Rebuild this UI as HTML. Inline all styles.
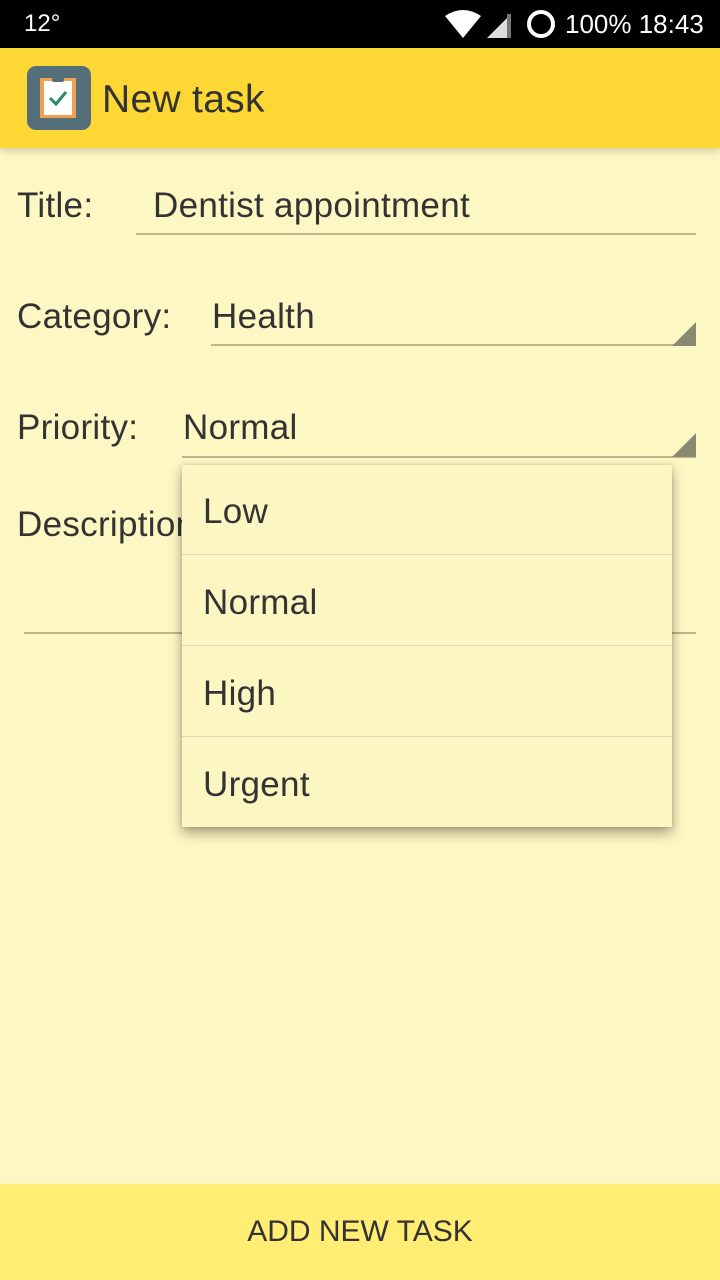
<!DOCTYPE html>
<html><head><meta charset="utf-8"><style>
*{margin:0;padding:0;box-sizing:border-box}
body{width:720px;height:1280px;background:#fdf7c3;font-family:"Liberation Sans",sans-serif;color:#333;position:relative;overflow:hidden}
.abs{position:absolute}
.sb{left:0;top:0;width:720px;height:48px;background:#000;color:#fff}
.hd{left:0;top:48px;width:720px;height:100px;background:#fdd835;box-shadow:0 3px 8px rgba(0,0,0,.18)}
.t{font-size:35px;letter-spacing:0.3px;white-space:nowrap}
.line{height:2px;background:#bdb68c}
.tri{width:0;height:0;border-left:24px solid transparent;border-bottom:24px solid #8a8a72}
.menu{left:182px;top:465px;width:490px;height:362px;background:#fcf6c2;box-shadow:0 6px 12px rgba(0,0,0,.35),0 0 4px rgba(0,0,0,.15);z-index:2}
.it{position:absolute;left:0;width:490px;height:90px;border-bottom:1px solid #ddd8b6}
.it span{position:absolute;left:21px;top:27px;font-size:35px;letter-spacing:0.3px}
</style></head><body>
<div class="abs sb">
 <div class="abs" style="left:24px;top:10px;font-size:24px">12°</div>
 <svg class="abs" style="left:443px;top:8px" width="72" height="32"><path d="M2 8 Q20 -4 38 8 L20 30Z" fill="#fff"/><path d="M44 30 L68 6 L68 30Z" fill="#ddd"/><rect x="64" y="6" width="4" height="24" fill="#777"/></svg>
 <svg class="abs" style="left:525px;top:9px" width="32" height="32"><circle cx="16" cy="15" r="12" fill="none" stroke="#fff" stroke-width="4"/></svg>
 <div class="abs" style="left:565px;top:9px;font-size:26px">100% 18:43</div>
</div>
<div class="abs hd">
 <svg class="abs" style="left:27px;top:18px" width="64" height="64"><rect width="64" height="64" rx="9" fill="#546e7a"/><rect x="13" y="12" width="36" height="40" fill="#f0a050"/><rect x="17" y="15" width="28" height="34" fill="#fff"/><rect x="25" y="9" width="12" height="7" rx="2" fill="#546e7a"/><path d="M23 32 L29 38 L39 26" stroke="#2e8b6a" stroke-width="3" fill="none"/></svg>
 <div class="abs t" style="left:102px;top:30px;font-size:39px;color:#333">New task</div>
</div>
<div class="abs t" style="left:17px;top:186px">Title:</div>
<div class="abs t" style="left:153px;top:186px">Dentist appointment</div>
<div class="abs line" style="left:136px;top:233px;width:560px"></div>
<div class="abs t" style="left:17px;top:297px">Category:</div>
<div class="abs t" style="left:212px;top:297px">Health</div>
<div class="abs line" style="left:211px;top:344px;width:485px"></div>
<div class="abs tri" style="left:672px;top:322px"></div>
<div class="abs t" style="left:17px;top:408px">Priority:</div>
<div class="abs t" style="left:183px;top:408px">Normal</div>
<div class="abs line" style="left:182px;top:456px;width:514px"></div>
<div class="abs tri" style="left:672px;top:433px"></div>
<div class="abs t" style="left:17px;top:505px">Description:</div>
<div class="abs line" style="left:24px;top:632px;width:672px"></div>
<div class="abs menu">
 <div class="it" style="top:0"><span>Low</span></div>
 <div class="it" style="top:91px"><span>Normal</span></div>
 <div class="it" style="top:182px"><span>High</span></div>
 <div class="it" style="top:273px;border:none"><span>Urgent</span></div>
</div>
<div class="abs" style="left:0;top:1184px;width:720px;height:96px;background:#ffee73;text-align:center;line-height:96px;font-size:30px;color:#333">ADD NEW TASK</div>
</body></html>
